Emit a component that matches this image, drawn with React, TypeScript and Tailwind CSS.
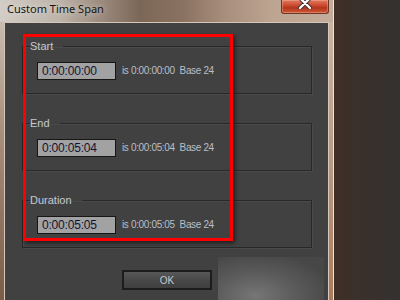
import React from "react";

const rows = [
  { label: "Start", value: "0:00:00:00" },
  { label: "End", value: "0:00:05:04" },
  { label: "Duration", value: "0:00:05:05" },
];

function Group({ label, value }: { label: string; value: string }) {
  return (
    <fieldset className="border border-[#282828] px-[7px] pb-[13px] shadow-[1px_1px_0_#4a4a4a,inset_1px_1px_0_#4a4a4a]">
      <legend className="pr-[10px] text-[11px] leading-[15px] text-[#c3c9d1]">{label}</legend>
      <div className="mt-[8px] ml-[7px] flex items-center">
        <div className="h-[18px] w-[79px] border border-[#161616] bg-[#a2a2a2] pl-[4px] pt-[1px] text-[12px] leading-[14px] tracking-[-0.2px] text-[#121232]">
          {value}
        </div>
        <div className="ml-[6px] whitespace-pre text-[10px] leading-[12px] tracking-[-0.35px] text-[#b9bfc7]">
          {`is ${value}  Base 24`}
        </div>
      </div>
    </fieldset>
  );
}

export default function App() {
  return (
    <div
      className="relative flex h-[300px] w-[400px] overflow-hidden"
      style={{ fontFamily: '"Liberation Sans", Arial, sans-serif' }}
    >
      {/* window */}
      <div className="flex h-full w-[334px] flex-col border-r border-[#efe3d8]">
        <div className="flex h-[22px] items-start bg-[linear-gradient(90deg,#d2cdc6_0%,#bdb3a9_18%,#9c8c7f_30%,#7c6757_42%,#8a7262_55%,#a98f7d_68%,#bda592_82%,#c3ac9b_100%)]">
          <div
            className="pl-[7px] pt-[1px] text-[11px] leading-[15px] text-[#141414] [text-shadow:0_0_6px_rgba(255,255,255,0.7)]"
            style={{ fontFamily: '"Noto Sans", "Open Sans", sans-serif' }}
          >
            Custom Time Span
          </div>
          <div className="ml-auto mr-[4px] flex h-[14px] w-[48px] items-start justify-center overflow-hidden rounded-b-[3px] border border-t-0 border-[#6b3528] bg-[linear-gradient(180deg,#e07a5f_0%,#c9472c_45%,#b3361d_60%,#cf5a36_100%)] shadow-[inset_0_0_0_1px_rgba(255,200,180,0.35)]">
            <svg width="16" height="12" viewBox="0 0 16 12" className="-mt-[3px]">
              <path d="M3 1 L13 11 M13 1 L3 11" stroke="#3a2a2a" strokeWidth="4.2" strokeLinecap="round" />
              <path d="M3 1 L13 11 M13 1 L3 11" stroke="#ffffff" strokeWidth="2.4" strokeLinecap="round" />
            </svg>
          </div>
        </div>
        <div className="flex flex-1">
          <div className="w-[4px] bg-[linear-gradient(180deg,#c8bcb0_0%,#a88e7c_40%,#7a5c48_100%)]" />
          <div className="flex flex-1 flex-col border border-b-0 border-[#d6c7b8] bg-[#414141] pl-[17px] pr-[16px] pt-[16px]">
            <div className="flex flex-col gap-[22px]">
              {rows.map((r) => (
                <Group key={r.label} label={r.label} value={r.value} />
              ))}
            </div>
            <div className="mt-[22px] flex justify-center">
              <div className="flex h-[20px] w-[90px] items-center justify-center border-2 border-[#1c1c1c] bg-[linear-gradient(180deg,#575757_0%,#484848_50%,#3f3f3f_100%)] text-[10px] text-[#c4c8ce]">
                OK
              </div>
            </div>
          </div>
          <div className="w-[4px] bg-[linear-gradient(180deg,#c9b3a3_0%,#b89a84_50%,#a97b5c_100%)]" />
        </div>
      </div>
      {/* desktop */}
      <div className="flex-1 bg-[linear-gradient(90deg,#3f2f26_0%,#3a302b_40%,#333231_100%)]" />

      {/* annotation overlay */}
      <div className="absolute left-[23px] top-[34px] h-[207px] w-[210px] border-[3px] border-[#ff0000] shadow-[2px_2px_4px_rgba(0,0,0,0.55)]" />
      {/* blurred patch */}
      <div className="absolute left-[218px] top-[257px] h-[43px] w-[106px] bg-[radial-gradient(ellipse_at_35%_90%,#767676_0%,#5c5c5c_40%,#474747_80%)]" />
    </div>
  );
}
